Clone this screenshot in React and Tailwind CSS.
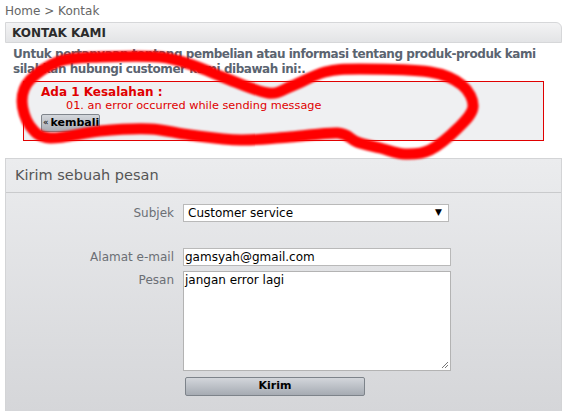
import React from "react";

// points of the hand-drawn red loop (page coordinates)
const LOOP = [
  [60, 61], [100, 57], [160, 57], [195, 66], [225, 78], [268, 93], [292, 86],
  [325, 72], [360, 69], [430, 72], [462, 85], [473, 107], [458, 128],
  [430, 150], [405, 154], [380, 148], [357, 142], [338, 133], [290, 137],
  [240, 140], [190, 135], [150, 129], [100, 131], [50, 138], [30, 126],
  [22, 101], [30, 80],
];

function loopPath(pts) {
  const n = pts.length;
  let d = `M ${pts[0][0]} ${pts[0][1]}`;
  for (let i = 0; i < n; i++) {
    const p0 = pts[(i - 1 + n) % n];
    const p1 = pts[i];
    const p2 = pts[(i + 1) % n];
    const p3 = pts[(i + 2) % n];
    const c1 = [p1[0] + (p2[0] - p0[0]) / 6, p1[1] + (p2[1] - p0[1]) / 6];
    const c2 = [p2[0] - (p3[0] - p1[0]) / 6, p2[1] - (p3[1] - p1[1]) / 6];
    d += ` C ${c1[0]} ${c1[1]} ${c2[0]} ${c2[1]} ${p2[0]} ${p2[1]}`;
  }
  return d;
}

function Scribble() {
  return (
    <svg
      className="pointer-events-none absolute left-0 top-0"
      width="570"
      height="413"
      viewBox="0 0 570 413"
    >
      <defs>
        <filter id="soft" x="-10%" y="-10%" width="120%" height="120%">
          <feGaussianBlur stdDeviation="1.2" />
        </filter>
      </defs>
      <path
        d={loopPath(LOOP)}
        fill="none"
        stroke="#ff0000"
        strokeWidth="11"
        strokeLinecap="round"
        strokeLinejoin="round"
        filter="url(#soft)"
      />
    </svg>
  );
}

function Row({ label, children, top }) {
  return (
    <div className={`flex ${top ? "items-start" : "items-center"}`}>
      <div className="w-[169px] pr-[1px] text-right text-[12px] text-[#6b6f75]">
        {label}
      </div>
      <div className="ml-[8px]">{children}</div>
    </div>
  );
}

export default function App() {
  return (
    <div
      className="relative h-[413px] w-[570px] overflow-hidden bg-white"
      style={{ fontFamily: '"DejaVu Sans", Verdana, sans-serif' }}
    >
      {/* Breadcrumb */}
      <div className="px-[5px] pt-[3px] text-[12px] leading-[16px] text-[#666]">
        Home &gt; Kontak
      </div>

      {/* Title bar */}
      <div className="mx-[5px] mt-[3px] flex h-[21px] w-[557px] items-center rounded-tr-[6px] border border-[#d6d7d9] bg-gradient-to-b from-[#f3f3f4] to-[#e3e4e6] pl-[6px] text-[12px] font-bold text-[#2b2b2b]">
        KONTAK KAMI
      </div>

      {/* Intro */}
      <p className="whitespace-nowrap px-[13px] pt-[4px] text-[12px] font-bold leading-[15px] tracking-[-0.45px] text-[#5b6470]">
        Untuk pertanyaan tentang pembelian atau informasi tentang produk-produk kami
        <br />
        silahkan hubungi customer kami dibawah ini:.
      </p>

      {/* Error box */}
      <div className="ml-[23px] mt-[4px] h-[60px] w-[521px] border border-[#e00000] bg-[#eff0f2] pl-[17px] pt-[3px]">
        <div className="text-[12px] font-bold leading-[14px] text-[#e00000]">
          Ada 1 Kesalahan :
        </div>
        <div className="pl-[25px] text-[11.3px] leading-[13px] text-[#e00000]">
          01. an error occurred while sending message
        </div>
        <button className="mt-[2px] flex h-[18px] w-[59px] items-center overflow-hidden rounded-[2px] border border-[#80858c] bg-gradient-to-b from-[#d4d7dc] to-[#a9aeb6] pl-[1px] text-[11px] font-bold text-black">
          <span className="mr-[2px] text-[9px] font-normal">«</span>kembali
        </button>
      </div>

      {/* Form panel */}
      <div className="ml-[5px] mt-[17px] h-[253px] w-[557px] border-x border-t border-[#d3d4d6] bg-gradient-to-b from-[#ebecee] to-[#d5d6d9]">
        <div className="flex h-[34px] items-center border-b border-[#c9cacc] pl-[9px] text-[14.5px] text-[#555]">
          Kirim sebuah pesan
        </div>

        <div className="pt-[11px]">
          <Row label="Subjek">
            <div className="flex h-[18px] w-[266px] items-center justify-between border border-[#b9b9b9] bg-white pl-[4px] pr-[6px] text-[12px] text-black">
              <span>Customer service</span>
              <span className="text-[9px]">▼</span>
            </div>
          </Row>

          <div className="mt-[26px]">
            <Row label="Alamat e-mail">
              <div className="flex h-[18px] w-[268px] items-center border border-[#b9b9b9] bg-white pl-[1px] text-[12px] text-black">
                gamsyah@gmail.com
              </div>
            </Row>
          </div>

          <div className="mt-[5px]">
            <Row label="Pesan" top>
              <div className="relative h-[100px] w-[268px] border border-[#b3b3b3] bg-white pl-[1px] pt-[1px] text-[12px] leading-[15px] text-black">
                jangan error lagi
                <svg
                  className="absolute bottom-[1px] right-[1px]"
                  width="9"
                  height="9"
                  viewBox="0 0 9 9"
                >
                  <path d="M8 2 L2 8 M8 5 L5 8" stroke="#777" strokeWidth="1" />
                </svg>
              </div>
            </Row>
          </div>

          <div className="ml-[179px] mt-[6px]">
            <button className="flex h-[19px] w-[180px] items-center justify-center rounded-[2px] border border-[#7d838a] bg-gradient-to-b from-[#d3d6db] to-[#a6abb3] text-[11px] font-bold text-black">
              Kirim
            </button>
          </div>
        </div>
      </div>

      <Scribble />
    </div>
  );
}
